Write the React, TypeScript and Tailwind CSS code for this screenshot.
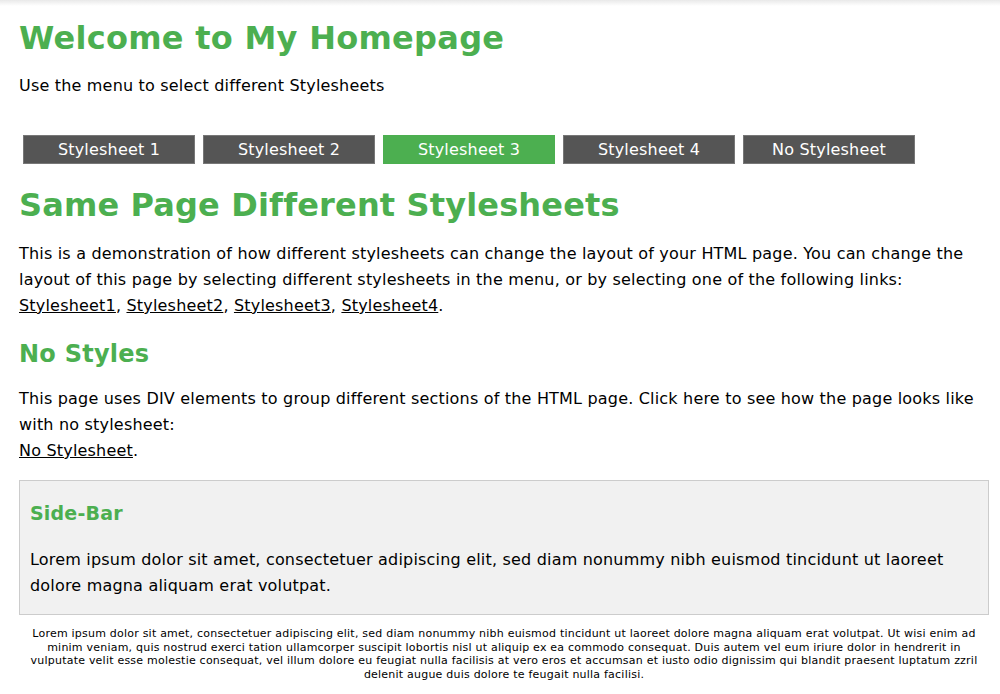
const menu = ["Stylesheet 1", "Stylesheet 2", "Stylesheet 3", "Stylesheet 4", "No Stylesheet"]

const font = "font-['Verdana','DejaVu_Sans',sans-serif]"

export default function App() {
  return (
    <div className={`${font} min-h-[694px] bg-white text-black tracking-[0.19px] pl-[19px] pr-[11px] pt-[18px]`}>
      {/* faint shade at the very top */}
      <div className="pointer-events-none fixed inset-x-0 top-0 h-[6px] bg-gradient-to-b from-[#e9e9e9] to-white/0" />

      <h1 className="text-[32px] font-bold leading-[40px] tracking-[0.28px] text-[#4caf50]">Welcome to My Homepage</h1>
      <p className="mt-[18px] text-[16px] leading-[20px]">Use the menu to select different Stylesheets</p>

      <div className="mt-[39px] flex gap-[8px] pl-[4px]">
        {menu.map((m) => (
          <a
            key={m}
            href="#"
            className={
              "w-[172px] h-[29px] flex items-center justify-center border text-[16px] text-white " +
              (m === "Stylesheet 3" ? "bg-[#4caf50] border-[#4caf50]" : "bg-[#555555] border-[#777777]")
            }
          >
            {m}
          </a>
        ))}
      </div>

      <h2 className="mt-[21px] text-[32px] font-bold leading-[40px] tracking-[0.15px] text-[#4caf50]">
        Same Page Different Stylesheets
      </h2>
      <p className="mt-[16px] text-[16px] leading-[26px]">
        This is a demonstration of how different stylesheets can change the layout of your HTML page. You can change the
        layout of this page by selecting different stylesheets in the menu, or by selecting one of the following links:
        <br />
        <a href="#" className="underline">Stylesheet1</a>, <a href="#" className="underline">Stylesheet2</a>,{" "}
        <a href="#" className="underline">Stylesheet3</a>, <a href="#" className="underline">Stylesheet4</a>.
      </p>

      <h3 className="mt-[20px] text-[24px] font-bold leading-[30px] tracking-[0.24px] text-[#4caf50]">No Styles</h3>
      <p className="mt-[17px] text-[16px] leading-[26px]">
        This page uses DIV elements to group different sections of the HTML page. Click here to see how the page looks like
        with no stylesheet:
        <br />
        <a href="#" className="underline">No Stylesheet</a>.
      </p>

      <div className="mt-[16px] border border-[#cccccc] bg-[#f1f1f1] px-[10px] pt-[20px] pb-[15px]">
        <h3 className="text-[19px] font-bold leading-[24px] text-[#4caf50]">Side-Bar</h3>
        <p className="mt-[22px] text-[16px] leading-[26px]">
          Lorem ipsum dolor sit amet, consectetuer adipiscing elit, sed diam nonummy nibh euismod tincidunt ut laoreet dolore
          magna aliquam erat volutpat.
        </p>
      </div>

      <p className="mt-[12px] px-[8px] text-center text-[11px] leading-[13.7px] tracking-[0.22px]">
        Lorem ipsum dolor sit amet, consectetuer adipiscing elit, sed diam nonummy nibh euismod tincidunt ut laoreet dolore magna
        aliquam erat volutpat. Ut wisi enim ad minim veniam, quis nostrud exerci tation ullamcorper suscipit lobortis nisl ut
        aliquip ex ea commodo consequat. Duis autem vel eum iriure dolor in hendrerit in vulputate velit esse molestie consequat,
        vel illum dolore eu feugiat nulla facilisis at vero eros et accumsan et iusto odio dignissim qui blandit praesent luptatum
        zzril delenit augue duis dolore te feugait nulla facilisi.
      </p>
    </div>
  )
}
